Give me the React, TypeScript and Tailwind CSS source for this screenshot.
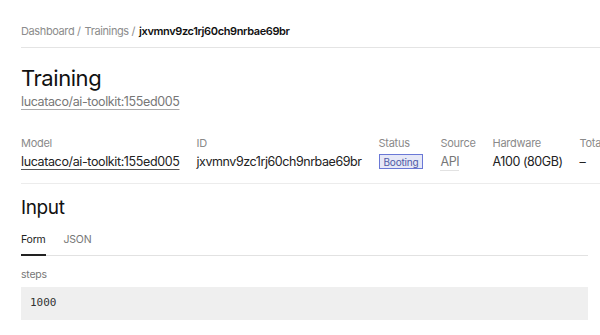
const meta = [
  { label: "Model", value: "lucataco/ai-toolkit:155ed005", kind: "link" },
  { label: "ID", value: "jxvmnv9zc1rj60ch9nrbae69br", kind: "text" },
  { label: "Status", value: "Booting", kind: "badge" },
  { label: "Source", value: "API", kind: "muted" },
  { label: "Hardware", value: "A100 (80GB)", kind: "text" },
  { label: "Total duration", value: "–", kind: "text" },
];

function MetaValue({ kind, value }: { kind: string; value: string }) {
  if (kind === "link") {
    return (
      <span className="text-[12.5px] leading-[18px] tracking-[-0.03em] text-[#222] underline decoration-[#555] underline-offset-[3px]">
        {value}
      </span>
    );
  }
  if (kind === "badge") {
    return (
      <span className="mt-[1px] inline-flex h-[15px] items-center border border-[#6a78d6] bg-[#e6e8f7] px-[4px] text-[10px] leading-none tracking-[-0.02em] text-[#4f5aa6]">
        {value}
      </span>
    );
  }
  if (kind === "muted") {
    return (
      <span className="border-b border-[#e2e2e2] text-[12.5px] leading-[17px] tracking-[-0.03em] text-[#777]">
        {value}
      </span>
    );
  }
  return (
    <span className="text-[12.5px] leading-[18px] tracking-[-0.035em] text-[#222]">{value}</span>
  );
}

export default function App() {
  return (
    <div
      className="h-[335px] w-[600px] overflow-hidden bg-white"
      style={{ fontFamily: "Inter, 'Noto Sans', sans-serif" }}
    >
      <nav className="ml-[21px] flex items-center gap-[4px] border-b border-[#e4e4e4] pt-[23px] pb-[8px] text-[11px] leading-[16px] tracking-[-0.035em]">
        <span className="text-[#8c8c8c]">Dashboard /</span>
        <span className="text-[#8c8c8c]">Trainings /</span>
        <span className="font-semibold text-[#111]">jxvmnv9zc1rj60ch9nrbae69br</span>
      </nav>

      <div className="px-[21px]">
        <h1 className="mt-[16px] text-[22px] leading-[28px] font-normal tracking-[-0.02em] text-[#111]">
          Training
        </h1>
        <a className="mt-[1px] block text-[12.5px] leading-[18px] tracking-[-0.03em] text-[#777] underline decoration-[#aaa] underline-offset-[3px]">
          lucataco/ai-toolkit:155ed005
        </a>
      </div>

      <div className="mt-[24px] ml-[21px] flex gap-[17px] border-b border-[#ececec] pb-[12px] whitespace-nowrap">
        {meta.map((m) => (
          <div key={m.label} className="flex shrink-0 flex-col items-start gap-[2px]">
            <span className="text-[11px] leading-[16px] tracking-[-0.025em] text-[#8a8a8a]">
              {m.label}
            </span>
            <MetaValue kind={m.kind} value={m.value} />
          </div>
        ))}
      </div>

      <div className="pr-[12px] pl-[21px]">
        <h2 className="mt-[12px] text-[19px] leading-[24px] font-normal tracking-[-0.02em] text-[#111]">
          Input
        </h2>
        <div className="mt-[12px] flex gap-[18px] border-b border-[#e2e2e2] text-[10.5px] leading-[16px] tracking-[-0.02em]">
          <span className="-mb-px border-b-2 border-[#222] pb-[6px] text-[#222]">Form</span>
          <span className="pb-[6px] text-[#777]">JSON</span>
        </div>
        <div className="mt-[11px] text-[10.5px] leading-[16px] tracking-[-0.02em] text-[#777]">steps</div>
        <div
          className="mt-[4px] flex h-[33px] items-center bg-[#efefef] pl-[9px] text-[11px] text-[#333]"
          style={{ fontFamily: "'DejaVu Sans Mono', monospace" }}
        >
          1000
        </div>
      </div>
    </div>
  );
}
